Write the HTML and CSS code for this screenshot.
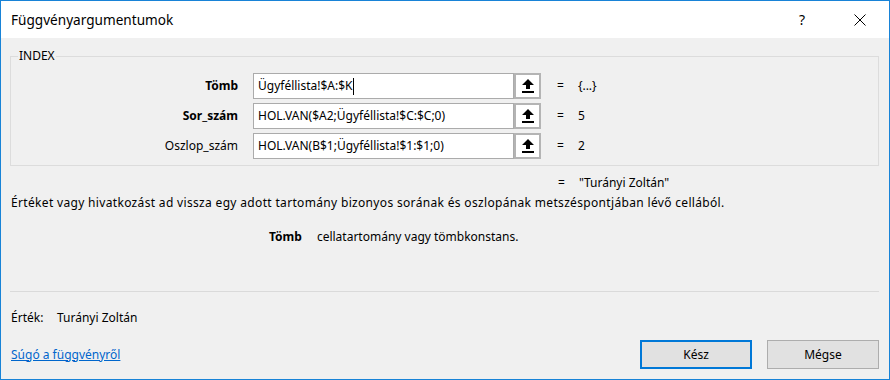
FILE: index.html
```html
<!doctype html>
<html lang="hu">
<head>
    <meta charset="UTF-8">
    <title>Függvényargumentumok</title>
    <link rel="stylesheet" href="styles.css">
</head>
<body>
    <div class="dialog">
        <div class="titlebar">
            <span class="title">Függvényargumentumok</span>
            <span class="tb_help">?</span>
            <span class="tb_close">
                <svg width="12" height="12" viewBox="0 0 12 12"><path d="M0.5 0.5L11.5 11.5M11.5 0.5L0.5 11.5" stroke="#000" stroke-width="1" fill="none"/></svg>
            </span>
        </div>
        <div class="content">
            <fieldset class="args">
                <legend>INDEX</legend>
                <div class="arg_row">
                    <label class="arg_name bold">Tömb</label>
                    <div class="ref_field">
                        <span class="ref_input">Ügyféllista!$A:$K<i class="caret"></i></span>
                        <span class="ref_btn">
                            <svg width="12" height="14" viewBox="0 0 12 14"><polygon points="6,0 12,6 8,6 8,10 4,10 4,6 0,6" fill="#000"/><rect x="0" y="12" width="12" height="2" fill="#000"/></svg>
                        </span>
                    </div>
                    <div class="arg_val"><span>=</span><span>{...}</span></div>
                </div>
                <div class="arg_row">
                    <label class="arg_name bold">Sor_szám</label>
                    <div class="ref_field">
                        <span class="ref_input">HOL.VAN($A2;Ügyféllista!$C:$C;0)</span>
                        <span class="ref_btn">
                            <svg width="12" height="14" viewBox="0 0 12 14"><polygon points="6,0 12,6 8,6 8,10 4,10 4,6 0,6" fill="#000"/><rect x="0" y="12" width="12" height="2" fill="#000"/></svg>
                        </span>
                    </div>
                    <div class="arg_val"><span>=</span><span>5</span></div>
                </div>
                <div class="arg_row">
                    <label class="arg_name">Oszlop_szám</label>
                    <div class="ref_field">
                        <span class="ref_input">HOL.VAN(B$1;Ügyféllista!$1:$1;0)</span>
                        <span class="ref_btn">
                            <svg width="12" height="14" viewBox="0 0 12 14"><polygon points="6,0 12,6 8,6 8,10 4,10 4,6 0,6" fill="#000"/><rect x="0" y="12" width="12" height="2" fill="#000"/></svg>
                        </span>
                    </div>
                    <div class="arg_val"><span>=</span><span>2</span></div>
                </div>
            </fieldset>

            <div class="result_row"><span>=</span><span>"Turányi Zoltán"</span></div>
            <p class="desc">Értéket vagy hivatkozást ad vissza egy adott tartomány bizonyos sorának és oszlopának metszéspontjában lévő cellából.</p>
            <p class="arg_help"><b>Tömb</b><span>cellatartomány vagy tömbkonstans.</span></p>

            <div class="sep"></div>

            <div class="value_row"><span class="value_lbl">Érték:</span><span>Turányi Zoltán</span></div>

            <div class="footer">
                <a href="#" class="help_link">Súgó a függvényről</a>
                <div class="buttons">
                    <input type="button" class="btn btn_default" value="Kész">
                    <input type="button" class="btn" value="Mégse">
                </div>
            </div>
        </div>
    </div>
</body>
</html>
```

FILE: styles.css
```css
*{
    padding:0;
    margin:0;
    box-sizing: border-box;
}
html,body{
    width: 890px;
    height: 380px;
    overflow: hidden;
}
body{
    font-family: "Noto Sans", "Open Sans", sans-serif;
    font-size: 12px;
    line-height: 16px;
    color: #000;
    background: #f0f0f0;
}
.dialog{
    width: 890px;
    height: 380px;
    border: 1px solid #1883d7;
    background: #f0f0f0;
}
/* title bar */
.titlebar{
    height: 37px;
    background: #fff;
    display: flex;
    align-items: center;
    padding: 0 23px 0 10px;
}
.title{
    font-size: 13.6px;
    flex: 1;
}
.tb_help{
    font-size: 14px;
    margin-right: 49px;
}
.tb_close{
    display: flex;
}
/* main content */
.content{
    padding: 0 10px 0 9px;
}
.args{
    margin-top: 10px;
    border: 1px solid #dcdcdc;
    padding: 9px 0 6px 0;
}
.args legend{
    margin-left: 7px;
    padding: 0 1px;
    line-height: 16px;
}
.arg_row{
    display: grid;
    grid-template-columns: 227px 288px 1fr;
    column-gap: 15px;
    align-items: center;
    height: 26px;
    margin-bottom: 4px;
}
.arg_row:last-child{
    margin-bottom: 0;
}
.arg_name{
    text-align: right;
}
.bold{
    font-weight: bold;
}
.ref_field{
    display: flex;
    height: 26px;
}
.ref_input{
    width: 261px;
    border: 1px solid #ababab;
    background: #fff;
    padding: 0 4px;
    display: flex;
    align-items: center;
    white-space: nowrap;
    overflow: hidden;
}
.caret{
    display: inline-block;
    width: 1px;
    height: 17px;
    background: #000;
}
.ref_btn{
    width: 27px;
    border: 2px solid #b4b4b4;
    background: #fff;
    display: flex;
    align-items: center;
    justify-content: center;
}
.arg_val{
    display: flex;
    gap: 14px;
    padding-left: 1px;
}
.result_row{
    display: flex;
    gap: 14px;
    margin-top: 9px;
    padding-left: 548px;
}
.desc{
    margin-top: 4px;
    padding-left: 1px;
    letter-spacing: 0.33px;
}
.arg_help{
    margin-top: 18px;
    padding-left: 259px;
    display: flex;
    gap: 15px;
}
.sep{
    margin-top: 46px;
    height: 1px;
    background: #dadada;
}
.value_row{
    margin-top: 18px;
    display: flex;
    padding-left: 1px;
}
.value_lbl{
    width: 46px;
}
.footer{
    margin-top: 14px;
    display: flex;
    align-items: center;
    justify-content: space-between;
    padding-left: 1px;
}
.help_link{
    color: #0066cc;
    text-decoration: underline;
}
.buttons{
    display: flex;
    gap: 15px;
}
.btn{
    width: 112px;
    height: 29px;
    border: 1px solid #adadad;
    background: #e1e1e1;
    font-family: inherit;
    font-size: 12px;
    color: #000;
}
.btn_default{
    border: 2px solid #0078d7;
}
```
